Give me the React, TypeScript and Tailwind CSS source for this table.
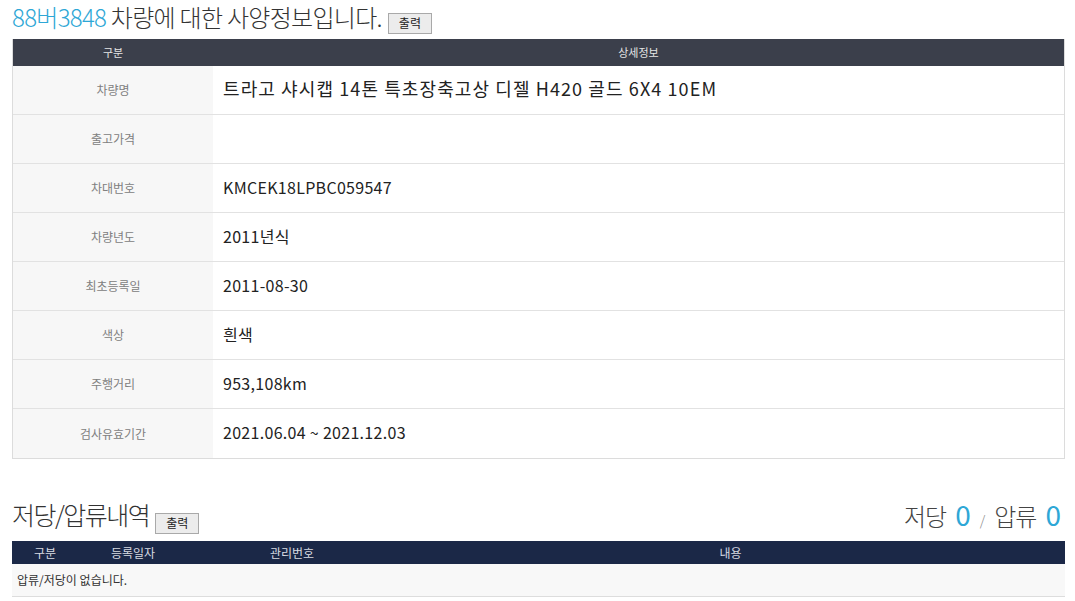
const font = { fontFamily: '"Noto Sans CJK KR", "Noto Sans", sans-serif' }

const rows: { label: string; value: string; big?: boolean }[] = [
  { label: '차량명', value: '트라고 샤시캡 14톤 특초장축고상 디젤 H420 골드 6X4 10EM', big: true },
  { label: '출고가격', value: '' },
  { label: '차대번호', value: 'KMCEK18LPBC059547' },
  { label: '차량년도', value: '2011년식' },
  { label: '최초등록일', value: '2011-08-30' },
  { label: '색상', value: '흰색' },
  { label: '주행거리', value: '953,108km' },
  { label: '검사유효기간', value: '2021.06.04 ~ 2021.12.03' },
]

function PrintButton() {
  return (
    <button className="h-[21px] w-[44px] border border-[#a9a9a9] bg-[#ececec] text-[12px] leading-none text-[#222]">
      출력
    </button>
  )
}

export default function App() {
  return (
    <div className="w-[1075px] h-[601px] overflow-hidden bg-white" style={font}>
      {/* Title */}
      <div className="flex h-[36px] items-start gap-[6px] pl-[12px]">
        <h1 className="text-[24px] leading-[34px] tracking-[-0.7px] font-light text-[#333]">
          <span className="text-[#2ea7d6]">88버3848</span> 차량에 대한 사양정보입니다.
        </h1>
        <div className="mt-[9px]">
          <PrintButton />
        </div>
      </div>

      {/* Spec table */}
      <div className="mx-[12px] mt-[3px] w-[1053px] border-r border-b border-l border-[#dcdcdc]">
        <div className="flex h-[27px] items-center bg-[#3b3f4b] text-[11px] text-[#e5e5e5]">
          <div className="w-[200px] text-center">구분</div>
          <div className="flex-1 text-center">상세정보</div>
        </div>
        {rows.map((r, i) => (
          <div
            key={r.label}
            className={`flex h-[49px] ${i < rows.length - 1 ? 'border-b border-[#e2e2e2]' : ''}`}
          >
            <div className="flex w-[200px] items-center justify-center bg-[#f7f7f7] text-[12px] text-[#808080]">
              {r.label}
            </div>
            <div
              className={`flex flex-1 items-center pb-[3px] pl-[10px] text-[#222] ${
                r.big ? 'text-[18px] tracking-[1.1px]' : 'text-[16px] tracking-[0.3px]'
              }`}
            >
              {r.value}
            </div>
          </div>
        ))}
      </div>

      {/* Mortgage / seizure */}
      <div className="mt-[36px] flex h-[46px] items-start justify-between px-[12px]">
        <div className="flex items-start gap-[6px]">
          <h2 className="mt-[3px] text-[25px] leading-[32px] tracking-[-1.5px] font-light text-[#333]">
            저당/압류내역
          </h2>
          <div className="mt-[14px]">
            <PrintButton />
          </div>
        </div>
        <div className="mt-[3px] flex items-baseline pr-[2px] font-light leading-[32px] text-[#444]">
          <span className="text-[24px] tracking-[-1px]">저당</span>
          <span className="ml-[9px] text-[28px] font-normal text-[#2ea7d6]">0</span>
          <span className="mx-[9px] text-[14px] text-[#888]">/</span>
          <span className="text-[24px] tracking-[-1px]">압류</span>
          <span className="ml-[9px] text-[28px] font-normal text-[#2ea7d6]">0</span>
        </div>
      </div>

      <div className="mx-[12px] w-[1053px]">
        <div className="flex h-[23px] items-center bg-[#1b2847] text-[12px] text-[#d8dbe2]">
          <div className="w-[66px] text-center">구분</div>
          <div className="w-[110px] text-center">등록일자</div>
          <div className="w-[208px] text-center">관리번호</div>
          <div className="flex-1 text-center">내용</div>
        </div>
        <div className="flex h-[33px] items-center border-b border-[#dddddd] bg-[#f8f8f8] pl-[5px] text-[12px] text-[#333]">
          압류/저당이 없습니다.
        </div>
      </div>
    </div>
  )
}
